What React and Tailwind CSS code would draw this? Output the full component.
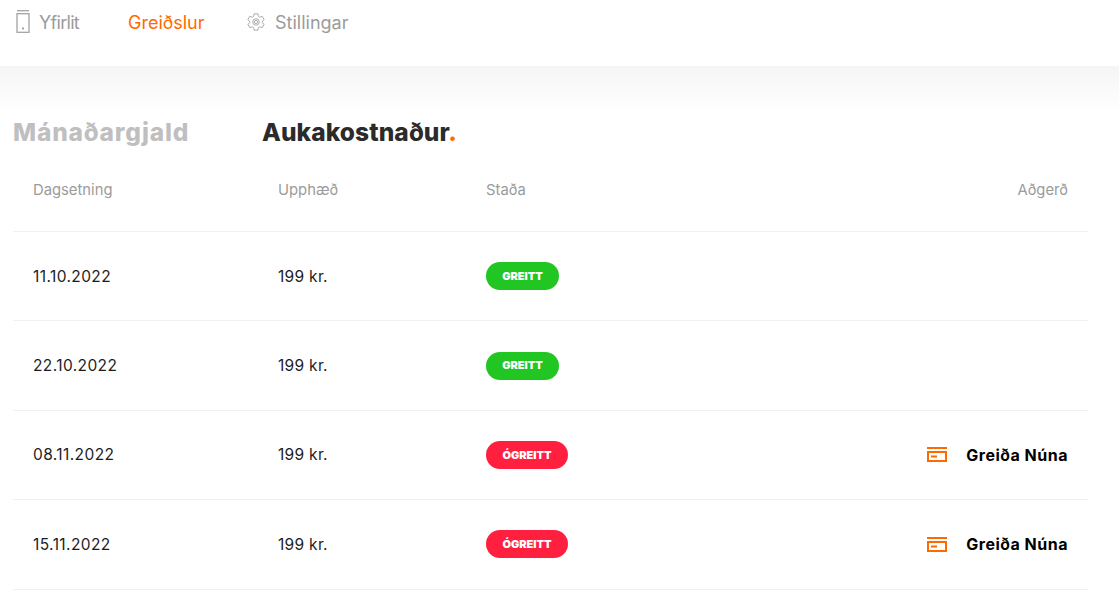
const font = { fontFamily: '"Inter", "Noto Sans", sans-serif' };

function Phone() {
  return (
    <svg width="14" height="23" viewBox="0 0 14 23" fill="none" stroke="#a3a3a3" strokeWidth="1.3" className="shrink-0">
      <path d="M1 .7h12" />
      <rect x="1" y="3.7" width="12" height="18.6" />
      <rect x="6" y="17.5" width="2" height="2" fill="#a3a3a3" stroke="none" />
    </svg>
  );
}

function Gear() {
  return (
    <svg width="18" height="18" viewBox="1 1 22 22" fill="none" stroke="#a3a3a3" strokeWidth="1.1" strokeLinejoin="round" className="shrink-0">
      <path d="M9.67 2h4.66l.6 3.1 1.7 1 3-1 2.33 4-2.4 2.1v1.6l2.4 2.1-2.33 4-3-1-1.7 1-.6 3.1H9.67l-.6-3.1-1.7-1-3 1-2.33-4 2.4-2.1v-1.6l-2.4-2.1 2.33-4 3 1 1.7-1z" />
      <circle cx="12" cy="12" r="4" />
      <circle cx="12" cy="12" r="2" />
    </svg>
  );
}

function Card() {
  return (
    <svg width="20" height="15" viewBox="0 0 20 15" fill="none" className="shrink-0">
      <rect x="0" y="0" width="20" height="2" fill="#ff6a00" />
      <rect x="1" y="5" width="18" height="9" stroke="#ff6a00" strokeWidth="2" />
      <rect x="4" y="8.5" width="6" height="2" fill="#ff6a00" />
    </svg>
  );
}

const rows = [
  { date: '11.10.2022', paid: true },
  { date: '22.10.2022', paid: true },
  { date: '08.11.2022', paid: false },
  { date: '15.11.2022', paid: false },
];

function Badge({ paid }) {
  return paid ? (
    <span className="flex h-[28px] w-[73px] items-center justify-center rounded-full bg-[#21c622] text-[11px] font-black text-white">GREITT</span>
  ) : (
    <span className="flex h-[28px] w-[82px] items-center justify-center rounded-full bg-[#ff2040] text-[11px] font-black text-white">ÓGREITT</span>
  );
}

function Row({ date, paid }) {
  return (
    <div className="flex h-[89.4px] items-center border-b border-[#f1f1f1] pl-[20px] pr-[20px] text-[15.5px] text-[#1d1d1d]">
      <span className="w-[245px] tracking-[0.4px]">{date}</span>
      <span className="w-[208px] tracking-[0.3px]">199 kr.</span>
      <Badge paid={paid} />
      {!paid && (
        <span className="ml-auto flex items-center gap-[19px] text-[16px] font-bold tracking-[0.5px] text-black">
          <Card />
          <span>Greiða Núna</span>
        </span>
      )}
    </div>
  );
}

export default function App() {
  return (
    <div style={font} className="h-[610px] w-[1119px] overflow-hidden bg-white">
      <nav className="flex h-[66px] items-start pl-[16px] pt-[10px] text-[18px] text-[#9b9b9b]">
        <span className="flex h-[23px] w-[112px] items-center gap-[9px]"><Phone /><span className="pt-[1px] tracking-[-0.7px]">Yfirlit</span></span>
        <span className="flex h-[23px] w-[119px] items-center pt-[1px] text-[#ff6a00]">Greiðslur</span>
        <span className="flex h-[23px] items-center gap-[10px]"><Gear /><span className="pt-[1px]">Stillingar</span></span>
      </nav>
      <main className="h-[544px] bg-gradient-to-b from-[#f5f5f5] to-white to-[46px] pl-[13px] pr-[31px]">
        <div className="flex items-center pt-[50px] text-[24.5px] font-extrabold leading-[32px]">
          <span className="w-[249px] tracking-[0.8px] text-[#bfbfc1]">Mánaðargjald</span>
          <span className="tracking-[0.1px] text-[#2b2b2b]">Aukakostnaður<span className="text-[#ff6a00]">.</span></span>
        </div>
        <div className="mt-[32px] flex h-[52px] items-start border-b border-[#f1f1f1] pl-[20px] pr-[20px] text-[14.8px] leading-[20px] text-[#9b9b9b]">
          <span className="w-[245px]">Dagsetning</span>
          <span className="w-[208px]">Upphæð</span>
          <span>Staða</span>
          <span className="ml-auto">Aðgerð</span>
        </div>
        {rows.map((r) => <Row key={r.date} {...r} />)}
      </main>
    </div>
  );
}
